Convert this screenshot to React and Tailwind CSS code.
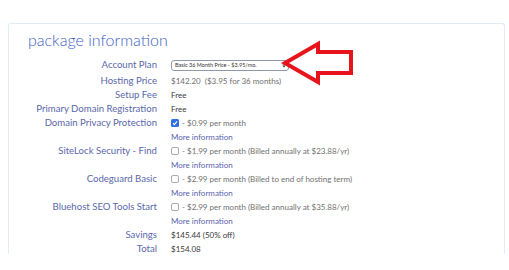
import React from "react";

const Row = ({ label, children, h = "h-[14px]" }) => (
  <div className={`flex items-center ${h}`}>
    <div className="w-[140px] shrink-0 text-right text-[9.6px] text-[#5a68aa] whitespace-nowrap">{label}</div>
    <div className="ml-[14px] flex items-center text-[8px] text-[#3a3a3a] whitespace-nowrap">{children}</div>
  </div>
);

const Box = ({ checked }) =>
  checked ? (
    <span className="mr-[3px] inline-flex h-[8px] w-[8px] items-center justify-center rounded-[1.5px] bg-[#2f6fe0]">
      <svg width="6" height="6" viewBox="0 0 6 6"><path d="M1 3.2 L2.4 4.6 L5 1.4" stroke="white" strokeWidth="1.1" fill="none" /></svg>
    </span>
  ) : (
    <span className="mr-[3px] inline-block h-[8px] w-[8px] rounded-[2px] border border-[#a9a9a9] bg-white" />
  );

const More = () => (
  <Row label="">
    <span className="text-[#5a5fae]">More information</span>
  </Row>
);

export default function App() {
  return (
    <div className="relative h-[270px] w-[509px] overflow-hidden bg-white" style={{ fontFamily: "Lato, 'Open Sans', sans-serif" }}>
      <div className="ml-[8px] mt-[23px] h-[231px] w-[497px] rounded-t-[3px] border-x border-t border-[#e3ecf6] pl-[19px] pt-[5px]">
        <div className="h-[21px] text-[16px] font-light leading-[21px] text-[#3d5ec6]">package information</div>
        <div className="ml-[-11px] mt-[6px] flex flex-col">
          <Row label="Account Plan" h="h-[18px]">
            <span className="flex h-[11px] w-[118px] items-center justify-between rounded-[3px] border border-[#8d97ad] pl-[3px] pr-[2px] text-[5.5px] text-[#333]">
              <span>Basic 36 Month Price - $3.95/mo.</span>
              <svg width="4" height="6" viewBox="0 0 4 6"><path d="M0.3 2.4 L2 0.6 L3.7 2.4 Z M0.3 3.6 L2 5.4 L3.7 3.6 Z" fill="#333" /></svg>
            </span>
          </Row>
          <Row label="Hosting Price">
            <span className="text-[#707070]">$142.20&nbsp;&nbsp;($3.95 for 36 months)</span>
          </Row>
          <Row label="Setup Fee">Free</Row>
          <Row label="Primary Domain Registration">Free</Row>
          <Row label="Domain Privacy Protection"><Box checked /><span className="text-[#707070]">- $0.99 per month</span></Row>
          <More />
          <Row label="SiteLock Security - Find"><Box /><span className="text-[#707070]">- $1.99 per month (Billed annually at $23.88/yr)</span></Row>
          <More />
          <Row label="Codeguard Basic"><Box /><span className="text-[#707070]">- $2.99 per month (Billed to end of hosting term)</span></Row>
          <More />
          <Row label="Bluehost SEO Tools Start"><Box /><span className="text-[#707070]">- $2.99 per month (Billed annually at $35.88/yr)</span></Row>
          <More />
          <Row label="Savings">$145.44 (50% off)</Row>
          <Row label="Total">$154.08</Row>
        </div>
      </div>
      <svg className="absolute left-0 top-0" width="509" height="270" viewBox="0 0 509 270">
        <polygon points="285,63 318,44 318,52 351,52 351,73 318,73 318,82" fill="none" stroke="#e8141c" strokeWidth="4" strokeLinejoin="miter" />
      </svg>
    </div>
  );
}
